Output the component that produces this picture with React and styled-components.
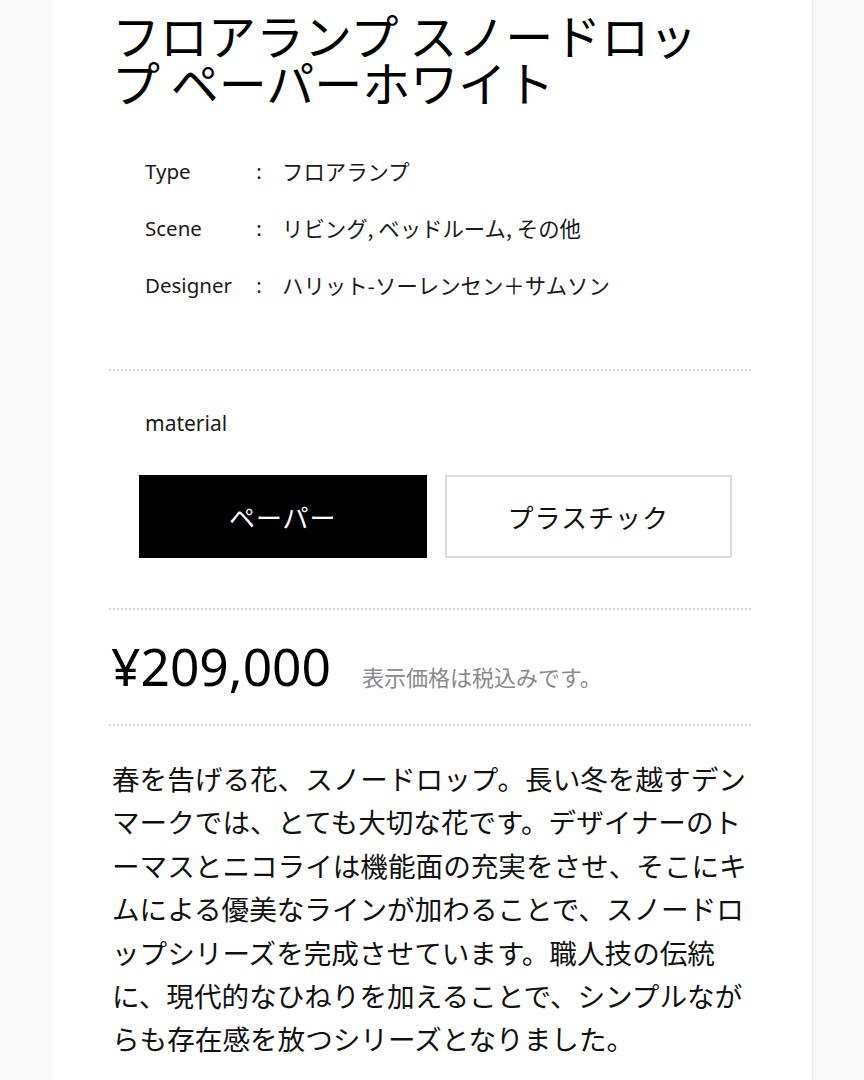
import React, { useState } from 'react';
import styled, { createGlobalStyle } from 'styled-components';

const GlobalStyle = createGlobalStyle`
  html, body {
    margin: 0;
    padding: 0;
    background: #f8f8f8;
  }
  body {
    font-family: "Noto Sans", "Noto Sans CJK JP", sans-serif;
    color: #111;
  }
`;

const Page = styled.div`
  width: 864px;
  min-height: 1080px;
  display: flex;
  justify-content: flex-start;
  background: #f8f8f8;
`;

const Panel = styled.main`
  margin-left: 52px;
  width: 761px;
  box-sizing: border-box;
  padding: 11px 61px 0 57px;
  background: #fff;
  border-right: 1px solid #ececec;
  min-height: 1080px;
`;

const Title = styled.h1`
  margin: 0;
  padding: 0 36px 0 3px;
  font-family: "Noto Sans CJK JP", sans-serif;
  font-size: 48px;
  font-weight: 400;
  line-height: 47px;
  color: #000;
`;

const Section = styled.section`
  padding: ${({ $pad }) => $pad};
  border-bottom: ${({ $last }) => ($last ? 'none' : '2px dotted #d6d6d6')};
`;

const SpecList = styled.dl`
  margin: 0;
  padding-left: 36px;
  display: grid;
  grid-template-columns: 102px 24px 1fr;
  grid-auto-rows: 57px;
  align-items: center;
  font-size: 20.5px;
  color: #1a1a1a;
`;

const SpecLabel = styled.dt`
  margin: 0;
`;

const SpecColon = styled.span`
  text-align: center;
`;

const SpecValue = styled.dd`
  margin: 0;
  padding-left: 11px;
  font-family: "Noto Sans CJK JP", sans-serif;
  font-size: 21.4px;
`;

const OptionLabel = styled.div`
  padding-left: 36px;
  font-size: 21px;
  line-height: 30px;
  color: #1a1a1a;
`;

const OptionGrid = styled.div`
  margin: 37px 19px 0 30px;
  display: grid;
  grid-template-columns: 1fr 1fr;
  gap: 18px;
`;

const OptionButton = styled.button`
  height: 83px;
  box-sizing: border-box;
  border: 2px solid ${({ $active }) => ($active ? '#000' : '#dcdcdc')};
  background: ${({ $active }) => ($active ? '#000' : '#fff')};
  color: ${({ $active }) => ($active ? '#fff' : '#111')};
  font-family: "Noto Sans CJK JP", sans-serif;
  font-size: 26px;
  letter-spacing: 1px;
  cursor: pointer;
`;

const PriceRow = styled.div`
  display: flex;
  align-items: baseline;
  padding-left: 2px;
`;

const Price = styled.span`
  font-family: "Noto Sans", sans-serif;
  font-size: 51.5px;
  line-height: 62px;
  color: #000;
`;

const TaxNote = styled.span`
  margin-left: 31px;
  font-family: "Noto Sans CJK JP", sans-serif;
  font-size: 22px;
  color: #8a8a8a;
`;

const Description = styled.p`
  margin: 0;
  padding-left: 3px;
  font-family: "Noto Sans CJK JP", sans-serif;
  font-size: 27.6px;
  line-height: 43.4px;
  color: #111;
`;

const specs = [
  { label: 'Type', value: 'フロアランプ' },
  { label: 'Scene', value: 'リビング, ベッドルーム, その他' },
  { label: 'Designer', value: 'ハリット-ソーレンセン＋サムソン' },
];

const materials = ['ペーパー', 'プラスチック'];

export default function App() {
  const [material, setMaterial] = useState(materials[0]);

  return (
    <Page>
      <GlobalStyle />
      <Panel>
        <Title>フロアランプ スノードロップ ペーパーホワイト</Title>

        <Section $pad="37px 0 56px">
          <SpecList>
            {specs.map((s) => (
              <React.Fragment key={s.label}>
                <SpecLabel>{s.label}</SpecLabel>
                <SpecColon>:</SpecColon>
                <SpecValue>{s.value}</SpecValue>
              </React.Fragment>
            ))}
          </SpecList>
        </Section>

        <Section $pad="37px 0 50px">
          <OptionLabel>material</OptionLabel>
          <OptionGrid>
            {materials.map((m) => (
              <OptionButton
                key={m}
                $active={material === m}
                onClick={() => setMaterial(m)}
              >
                {m}
              </OptionButton>
            ))}
          </OptionGrid>
        </Section>

        <Section $pad="25px 0 27px">
          <PriceRow>
            <Price>¥209,000</Price>
            <TaxNote>表示価格は税込みです。</TaxNote>
          </PriceRow>
        </Section>

        <Section $pad="31px 0 0" $last>
          <Description>
            春を告げる花、スノードロップ。長い冬を越すデンマークでは、とても大切な花です。デザイナーのトーマスとニコライは機能面の充実をさせ、そこにキムによる優美なラインが加わることで、スノードロップシリーズを完成させています。職人技の伝統に、現代的なひねりを加えることで、シンプルながらも存在感を放つシリーズとなりました。
          </Description>
        </Section>
      </Panel>
    </Page>
  );
}
